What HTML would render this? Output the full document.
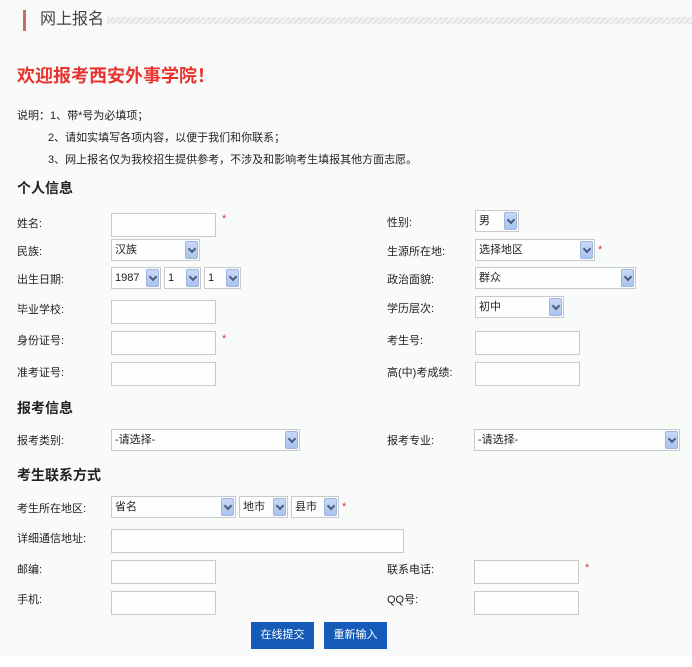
<!DOCTYPE html>
<html><head><meta charset="utf-8"><style>
*{margin:0;padding:0;box-sizing:border-box}
body{width:692px;height:667px;background:#fff;font-family:"Liberation Sans","Noto Sans CJK SC",sans-serif;color:#222;position:relative;overflow:hidden}
#bg{position:absolute;left:0;top:0;width:692px;height:656px;background:#f9fbfb}
.a{position:absolute;white-space:nowrap}
.l{font-size:11px;line-height:14px}
.in{position:absolute;border:1px solid #c9c9c9;background:#fdfefe;height:24px}
.sel{position:absolute;border:1px solid #c9c9c9;background:#fdfefe;height:22px;font-size:11px;line-height:20px;padding-left:3px}
.sel i{position:absolute;right:1px;top:1px;width:13px;height:18px;background:linear-gradient(#c9d9f7,#a9c2ef);border:1px solid #9fb5e0;border-radius:2px}
.sel i:after{content:"";position:absolute;left:3px;top:4px;width:4px;height:4px;border-right:2px solid #4a5a7c;border-bottom:2px solid #4a5a7c;transform:rotate(45deg)}
.st{position:absolute;color:#e33;font-size:11px}
h3{position:absolute;font-size:14px;font-weight:bold;left:17px}
.btn{position:absolute;background:#165bb8;color:#fff;font-size:11px;text-align:center;line-height:26px;height:27px;width:63px}
</style></head><body>
<div id="bg"></div>
<div class="a" style="left:23px;top:10px;width:3px;height:21px;background:#c96a6a"></div>
<div class="a" style="left:40px;top:10px;font-size:16px;line-height:20px;color:#444">网上报名</div>
<div class="a" style="left:107px;top:17px;width:585px;height:7px;background:repeating-linear-gradient(135deg,#e4e4e4 0 2px,#f4f4f4 2px 4px)"></div>
<div class="a" style="left:17px;top:62px;font-size:18px;font-weight:bold;color:#e8332f">欢迎报考西安外事学院！</div>
<div class="a l" style="left:17px;top:109px">说明：1、带*号为必填项；</div>
<div class="a l" style="left:48px;top:131px">2、请如实填写各项内容，以便于我们和你联系；</div>
<div class="a l" style="left:48px;top:153px">3、网上报名仅为我校招生提供参考，不涉及和影响考生填报其他方面志愿。</div>
<h3 style="top:178px">个人信息</h3>
<div class="a l" style="left:17px;top:217px">姓名:</div>
<div class="in" style="left:111px;top:213px;width:105px"></div><div class="st" style="left:222px;top:213px">*</div>
<div class="a l" style="left:17px;top:245px">民族:</div>
<div class="sel" style="left:111px;top:239px;width:89px">汉族<i></i></div>
<div class="a l" style="left:17px;top:273px">出生日期:</div>
<div class="sel" style="left:111px;top:267px;width:50px">1987<i></i></div>
<div class="sel" style="left:164px;top:267px;width:37px">1<i></i></div>
<div class="sel" style="left:204px;top:267px;width:37px">1<i></i></div>
<div class="a l" style="left:17px;top:303px">毕业学校:</div>
<div class="in" style="left:111px;top:300px;width:105px"></div>
<div class="a l" style="left:17px;top:334px">身份证号:</div>
<div class="in" style="left:111px;top:331px;width:105px"></div><div class="st" style="left:222px;top:333px">*</div>
<div class="a l" style="left:17px;top:366px">准考证号:</div>
<div class="in" style="left:111px;top:362px;width:105px"></div>

<div class="a l" style="left:387px;top:216px">性别:</div>
<div class="sel" style="left:475px;top:210px;width:44px">男<i></i></div>
<div class="a l" style="left:387px;top:245px">生源所在地:</div>
<div class="sel" style="left:475px;top:239px;width:120px">选择地区<i></i></div><div class="st" style="left:598px;top:244px">*</div>
<div class="a l" style="left:387px;top:273px">政治面貌:</div>
<div class="sel" style="left:475px;top:267px;width:161px">群众<i></i></div>
<div class="a l" style="left:387px;top:302px">学历层次:</div>
<div class="sel" style="left:475px;top:296px;width:89px">初中<i></i></div>
<div class="a l" style="left:387px;top:334px">考生号:</div>
<div class="in" style="left:475px;top:331px;width:105px"></div>
<div class="a l" style="left:387px;top:366px">高(中)考成绩:</div>
<div class="in" style="left:475px;top:362px;width:105px"></div>

<h3 style="top:398px">报考信息</h3>
<div class="a l" style="left:17px;top:434px">报考类别:</div>
<div class="sel" style="left:111px;top:429px;width:189px">-请选择-<i></i></div>
<div class="a l" style="left:387px;top:434px">报考专业:</div>
<div class="sel" style="left:474px;top:429px;width:206px">-请选择-<i></i></div>

<h3 style="top:465px">考生联系方式</h3>
<div class="a l" style="left:17px;top:502px">考生所在地区:</div>
<div class="sel" style="left:111px;top:496px;width:125px">省名<i></i></div>
<div class="sel" style="left:239px;top:496px;width:49px">地市<i></i></div>
<div class="sel" style="left:291px;top:496px;width:48px">县市<i></i></div><div class="st" style="left:342px;top:501px">*</div>
<div class="a l" style="left:17px;top:532px">详细通信地址:</div>
<div class="in" style="left:111px;top:529px;width:293px"></div>
<div class="a l" style="left:17px;top:563px">邮编:</div>
<div class="in" style="left:111px;top:560px;width:105px"></div>
<div class="a l" style="left:387px;top:563px">联系电话:</div>
<div class="in" style="left:474px;top:560px;width:105px"></div><div class="st" style="left:585px;top:562px">*</div>
<div class="a l" style="left:17px;top:593px">手机:</div>
<div class="in" style="left:111px;top:591px;width:105px"></div>
<div class="a l" style="left:387px;top:593px">QQ号:</div>
<div class="in" style="left:474px;top:591px;width:105px"></div>
<div class="btn" style="left:251px;top:622px">在线提交</div>
<div class="btn" style="left:324px;top:622px">重新输入</div>
</body></html>
